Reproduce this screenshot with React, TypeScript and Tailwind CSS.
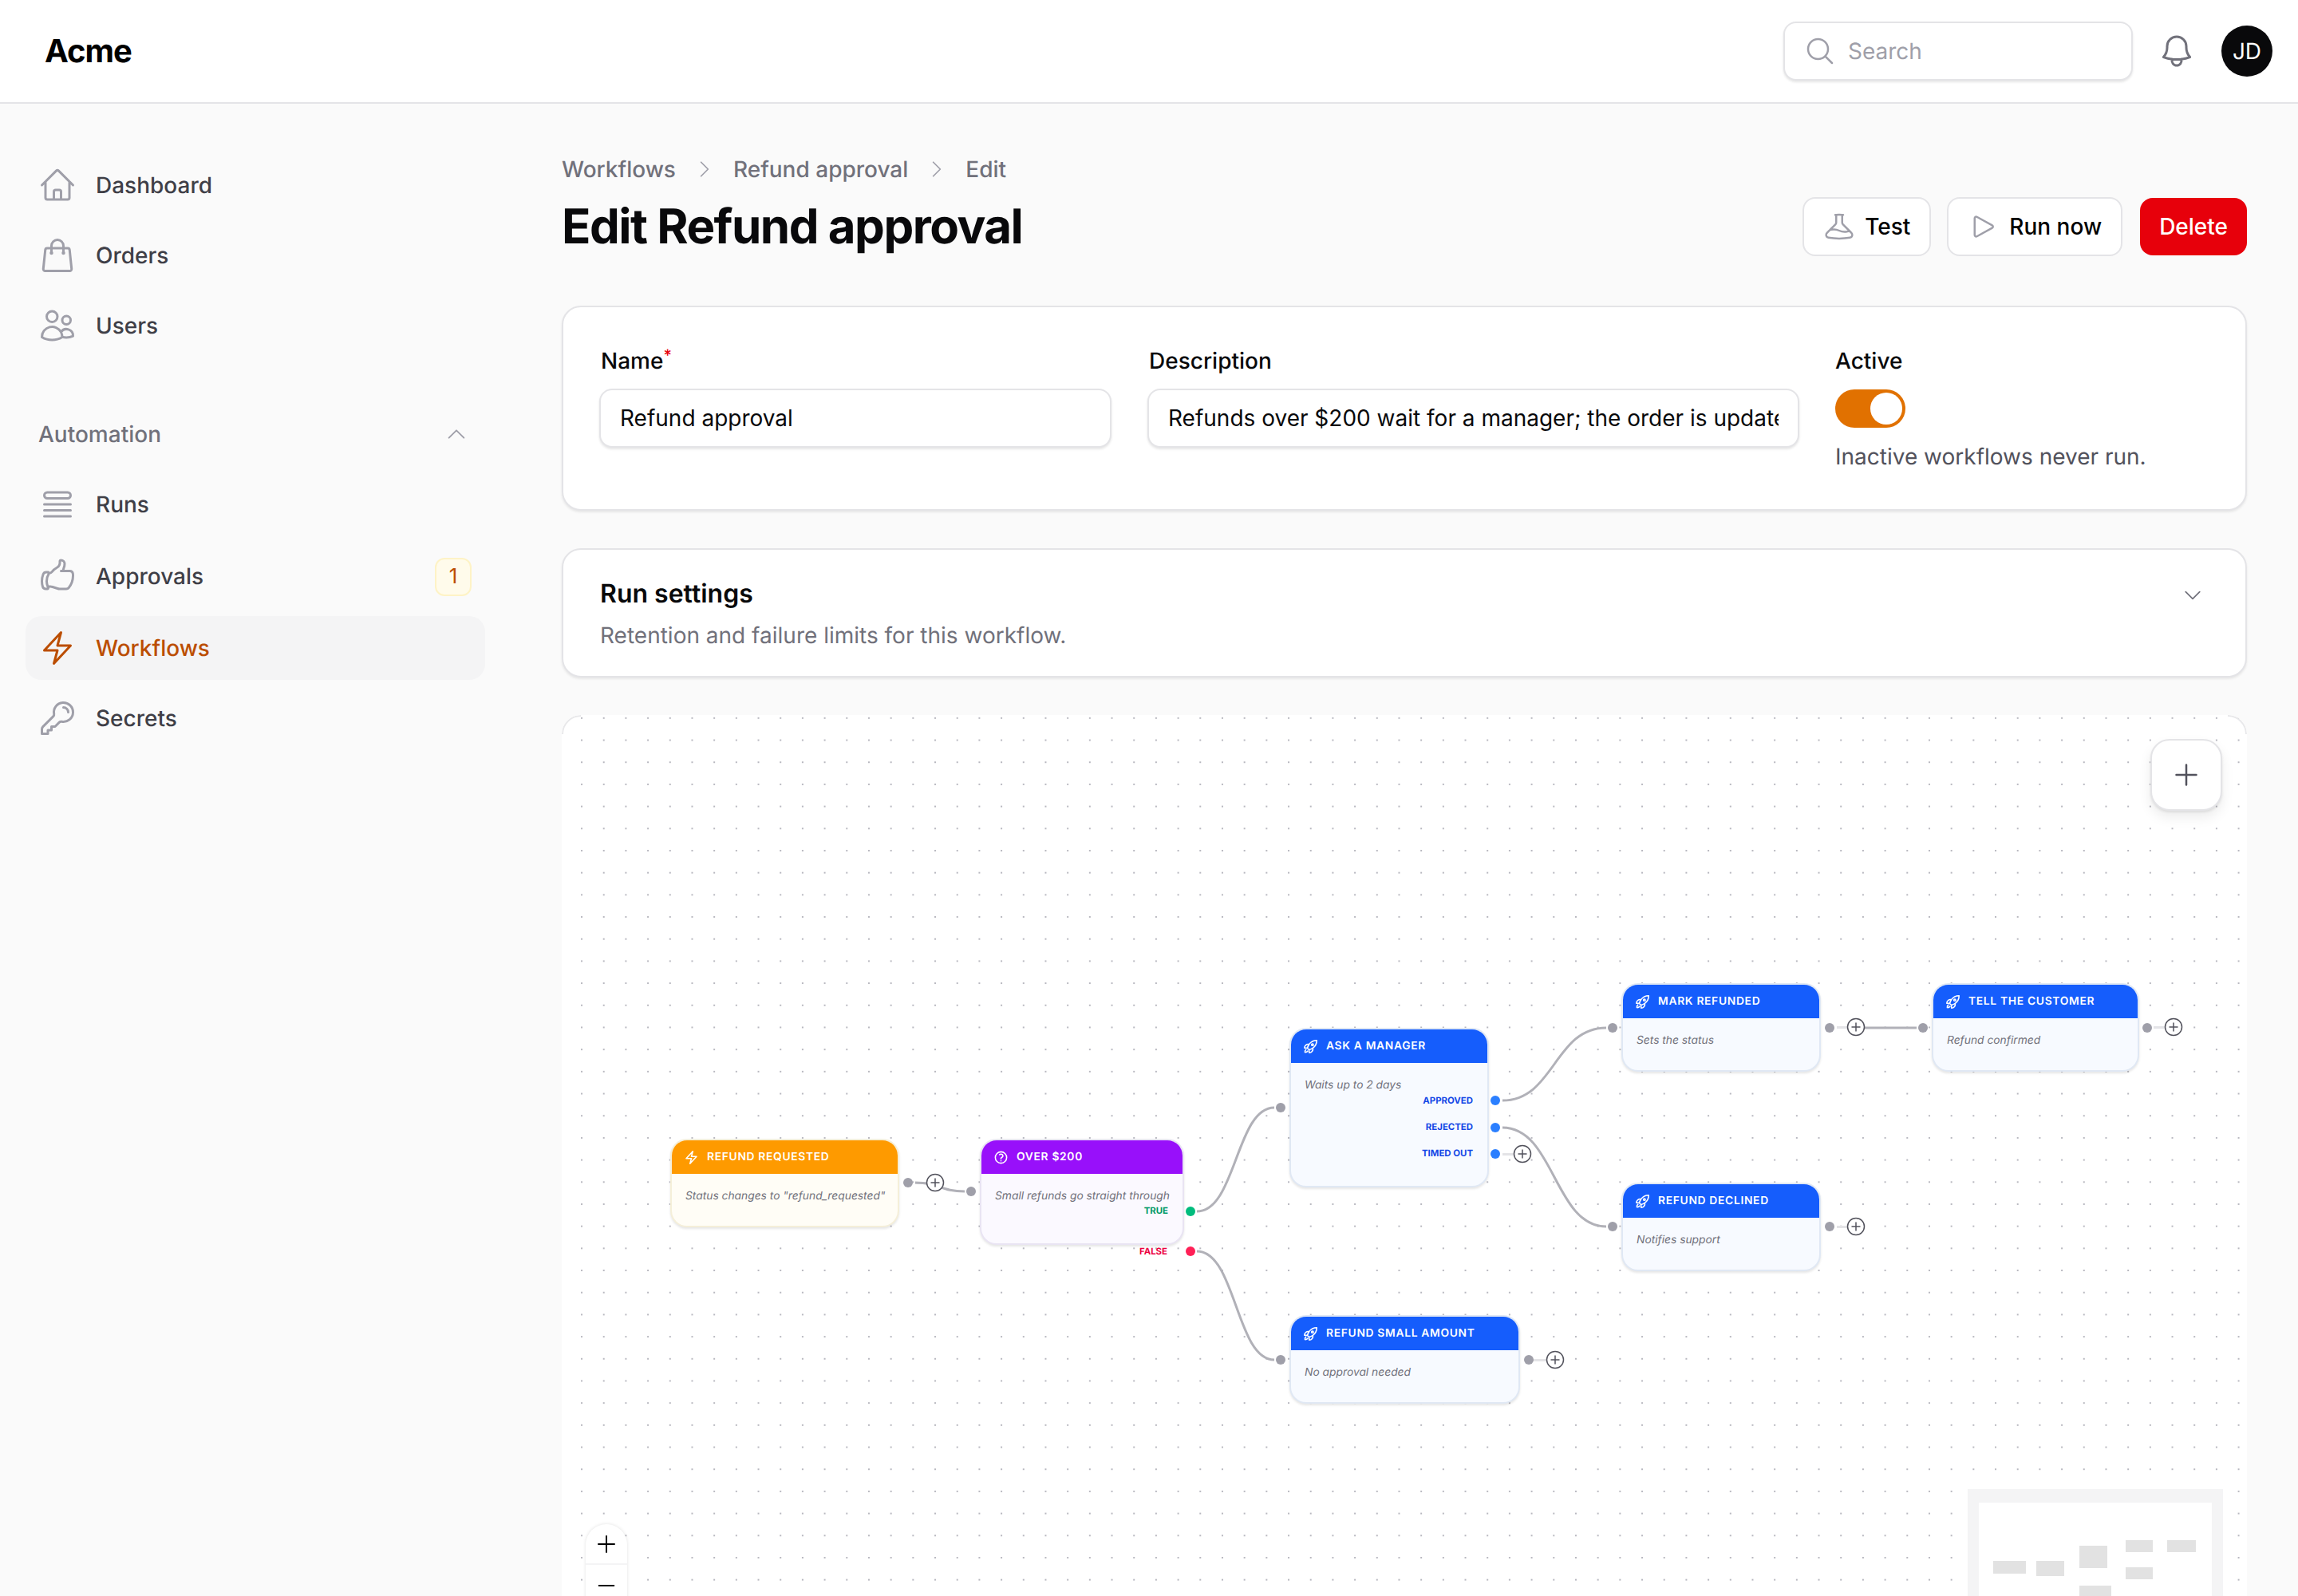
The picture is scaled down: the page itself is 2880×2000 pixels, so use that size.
import React from "react";
import {
  HiOutlineHome, HiOutlineShoppingBag, HiOutlineUsers, HiOutlineQueueList, HiOutlineHandThumbUp,
  HiOutlineBolt, HiOutlineKey, HiOutlineBeaker, HiOutlinePlay, HiOutlineBell, HiOutlineMagnifyingGlass,
  HiOutlineChevronUp, HiOutlineChevronDown, HiOutlineChevronRight, HiOutlineRocketLaunch,
  HiOutlineQuestionMarkCircle, HiOutlinePlus, HiOutlineMinus,
} from "react-icons/hi2";

function NavItem({ icon: Icon, label, active, badge, tall }: { icon: any; label: string; active?: boolean; badge?: string; tall?: boolean }) {
  return (
    <div className={`flex items-center gap-6 rounded-[20px] pr-[17px] pl-4 text-[28px] leading-[40px] font-medium ${tall ? "h-[84px]" : "h-20"} ${active ? "bg-zinc-100 text-amber-700" : "text-zinc-700"}`}>
      <Icon className={`h-12 w-12 shrink-0 ${active ? "text-amber-700" : "text-zinc-400"}`} />
      <span className="flex-1">{label}</span>
      {badge && (
        <span className="mt-[2px] flex h-12 w-[46px] items-center justify-center rounded-xl border-2 border-amber-100 bg-amber-50 text-[26px] font-normal text-amber-700">{badge}</span>
      )}
    </div>
  );
}

function PlusDot({ className }: { className: string }) {
  return (
    <svg className={`absolute h-6 w-6 ${className}`} viewBox="0 0 24 24" fill="none">
      <circle cx="12" cy="12" r="10.5" fill="#fff" stroke="#52525c" strokeWidth="1.5" />
      <path d="M12 6.5v11M6.5 12h11" stroke="#52525c" strokeWidth="1.5" />
    </svg>
  );
}

function Handle({ className }: { className: string }) {
  return <span className={`absolute h-3 w-3 rounded-full ${className}`} />;
}

function FlowNode({ className, head, body, border, icon: Icon, title, sub, children }: { className: string; head: string; body: string; border: string; icon: any; title: string; sub: string; children?: React.ReactNode }) {
  return (
    <div className={`absolute overflow-hidden rounded-[21px] border-2 shadow-[0_2px_3px_rgba(0,0,0,0.1)] ${border} ${body} ${className}`}>
      <div className={`flex h-[42px] items-center gap-[10px] pt-[1px] pl-[15px] text-[13.8px] font-semibold tracking-[0.05em] text-white uppercase ${head}`}>
        <Icon className="h-[19px] w-[19px] shrink-0 stroke-2" />
        <span>{title}</span>
      </div>
      <div className="pt-[18px] pl-[17px] text-[13.8px] leading-[20px] text-zinc-500 italic">{sub}</div>
      {children}
    </div>
  );
}

export default function App() {
  return (
    <div className="flex h-[2000px] w-[2880px] flex-col overflow-hidden bg-zinc-50 font-['Inter',sans-serif] text-[28px] text-zinc-950 [text-rendering:geometricPrecision]">
      <header className="flex h-[130px] shrink-0 items-center justify-between border-b-2 border-zinc-200 bg-white pr-8 pl-[56px]">
        <div className="text-[40px] font-bold tracking-tight text-black">Acme</div>
        <div className="flex items-center">
          <div className="flex h-[74px] w-[438px] items-center gap-[15px] rounded-2xl border-2 border-zinc-200 bg-white pl-[24px] shadow-[0_2px_3px_rgba(0,0,0,0.1)]">
            <HiOutlineMagnifyingGlass className="h-10 w-10 text-zinc-400" />
            <span className="text-zinc-400">Search</span>
          </div>
          <HiOutlineBell className="ml-[31px] h-12 w-12 text-zinc-500" />
          <div className="ml-[32px] flex h-16 w-16 items-center justify-center rounded-full bg-zinc-950 text-white">JD</div>
        </div>
      </header>
      <div className="flex min-h-0 flex-1">
        <aside className="flex w-[640px] shrink-0 flex-col px-8 pt-[62px]">
          <div className="flex flex-col gap-2">
            <NavItem icon={HiOutlineHome} label="Dashboard" />
            <NavItem icon={HiOutlineShoppingBag} label="Orders" />
            <NavItem icon={HiOutlineUsers} label="Users" />
          </div>
          <div className="mt-[64px] mb-[16px] flex h-[64px] items-center justify-between pr-[21px] pl-[16px] font-medium text-zinc-500">
            <span>Automation</span>
            <HiOutlineChevronUp className="h-[30px] w-[30px] text-zinc-400" />
          </div>
          <div className="flex flex-col gap-2">
            <NavItem icon={HiOutlineQueueList} label="Runs" />
            <NavItem icon={HiOutlineHandThumbUp} label="Approvals" badge="1" tall />
            <NavItem icon={HiOutlineBolt} label="Workflows" active />
            <NavItem icon={HiOutlineKey} label="Secrets" />
          </div>
        </aside>
        <main className="min-w-0 flex-1 pt-[62px] pr-16 pl-16">
          <div className="flex h-10 items-center gap-[22px] font-medium text-zinc-500">
            <span>Workflows</span>
            <HiOutlineChevronRight className="h-[28px] w-[28px] text-zinc-400" />
            <span>Refund approval</span>
            <HiOutlineChevronRight className="h-[28px] w-[28px] text-zinc-400" />
            <span>Edit</span>
          </div>
          <div className="mt-[15px] flex items-center justify-between">
            <h1 className="text-[60px] leading-[72px] font-bold tracking-tight">Edit Refund approval</h1>
            <div className="flex items-center gap-[22px] text-[28px] font-medium">
              <button className="-mr-[2px] flex h-[74px] items-center gap-3 rounded-2xl border-2 border-zinc-200 bg-white px-[24px] text-black">
                <HiOutlineBeaker className="h-10 w-10 text-zinc-400" />
                Test
              </button>
              <button className="flex h-[74px] items-center gap-3 rounded-2xl border-2 border-zinc-200 bg-white px-[24px] text-black">
                <HiOutlinePlay className="h-10 w-10 text-zinc-400" />
                Run now
              </button>
              <button className="flex h-[72px] items-center rounded-2xl bg-red-600 px-[24px] text-white">Delete</button>
            </div>
          </div>

          <section className="mt-[62px] h-[257px] rounded-[24px] border-2 border-zinc-200 bg-white pt-[46px] pl-[45px] shadow-[0_2px_3px_rgba(0,0,0,0.08)]">
            <div className="grid grid-cols-[642px_817px_1fr] gap-x-[45px]">
              <div>
                <label className="block h-[56px] pl-[2px] font-medium">Name<span className="relative -top-[10px] text-[20px] text-red-600">*</span></label>
                <input readOnly value="Refund approval" className="h-[74px] w-full rounded-2xl border-2 border-zinc-200 bg-white px-[24px] shadow-[0_2px_3px_rgba(0,0,0,0.1)] outline-none" />
              </div>
              <div>
                <label className="block h-[56px] pl-[2px] font-medium">Description</label>
                <input readOnly value="Refunds over $200 wait for a manager; the order is updated either way." className="h-[74px] w-full rounded-2xl border-2 border-zinc-200 bg-white px-[24px] shadow-[0_2px_3px_rgba(0,0,0,0.1)] outline-none" />
              </div>
              <div>
                <label className="block h-[57px] font-medium">Active</label>
                <div className="flex h-12 w-[88px] items-center justify-end rounded-full bg-amber-600 pr-1">
                  <span className="h-10 w-10 rounded-full bg-white" />
                </div>
                <p className="mt-[15px] text-zinc-600">Inactive workflows never run.</p>
              </div>
            </div>
          </section>

          <section className="mt-[47px] flex h-[162px] items-start justify-between rounded-[24px] border-2 border-zinc-200 bg-white pt-[32px] pr-[52px] pl-[46px] shadow-[0_2px_3px_rgba(0,0,0,0.08)]">
            <div>
              <div className="text-[32px] leading-[46px] font-semibold">Run settings</div>
              <div className="mt-[8px] text-zinc-500">Retention and failure limits for this workflow.</div>
            </div>
            <HiOutlineChevronDown className="mt-[11px] h-[28px] w-[28px] text-zinc-500" />
          </section>

          <section className="relative mt-[47px] h-[1200px] overflow-hidden rounded-[24px] bg-white bg-[radial-gradient(circle,#b8b8c0_1px,transparent_1.2px)] bg-[size:27.7px_27.7px] bg-[position:11.2px_-10px]">
            <svg className="absolute inset-0 h-full w-full" fill="none">
              <path d="M1 24A23 23 0 0 1 24 1" stroke="#e8e8ea" strokeWidth="2" />
              <path d="M2111 24A23 23 0 0 0 2088 1" stroke="#e8e8ea" strokeWidth="2" />
              <g stroke="#e4e4e7" strokeWidth="3">
                <path d="M443 586.5H468" />
                <path d="M1598 391.5H1622" />
                <path d="M1598 641.5H1622" />
                <path d="M1995 391.5H2020" />
                <path d="M1212 808.5H1238" />
                <path d="M1179 550.5H1204" />
              </g>
              <g stroke="#b1b1b8" strokeWidth="3">
                <path d="M443 586C474 586 474 597 505 597" />
                <path d="M796 622C845 622 845 492 893 492" />
                <path d="M796 672C845 672 845 808 893 808" />
                <path d="M1179 483C1244 483 1244 392 1309 392" />
                <path d="M1179 517C1244 517 1244 641 1309 641" />
                <path d="M1622 392H1698" />
              </g>
            </svg>

            <FlowNode className="top-[531px] left-[136px] h-[111px] w-[287px]" border="border-[#f5efd9]" head="bg-amber-500" body="bg-[#fffdf6]" icon={HiOutlineBolt} title="Refund requested" sub={'Status changes to "refund_requested"'} />
            <FlowNode className="top-[531px] left-[524px] h-[133px] w-[256px]" border="border-[#e9e4f3]" head="bg-purple-600" body="bg-[#fbf9ff]" icon={HiOutlineQuestionMarkCircle} title="Over $200" sub="Small refunds go straight through">
              <span className="absolute top-[80px] right-[18px] text-[11.4px] leading-4 font-bold text-emerald-600">TRUE</span>
            </FlowNode>
            <span className="absolute top-[664px] right-[1353px] text-[11.4px] leading-4 font-bold text-rose-600">FALSE</span>
            <FlowNode className="top-[392px] left-[912px] h-[200px] w-[250px]" border="border-[#e0e8f4]" head="bg-blue-600" body="bg-[#f7faff]" icon={HiOutlineRocketLaunch} title="Ask a manager" sub="Waits up to 2 days">
              <span className="absolute top-[81px] right-[18px] text-[11.4px] leading-4 font-bold text-blue-700">APPROVED</span>
              <span className="absolute top-[114px] right-[18px] text-[11.4px] leading-4 font-bold text-blue-700">REJECTED</span>
              <span className="absolute top-[147px] right-[18px] text-[11.4px] leading-4 font-bold text-blue-700">TIMED OUT</span>
            </FlowNode>
            <FlowNode className="top-[336px] left-[1328px] h-[111px] w-[250px]" border="border-[#e0e8f4]" head="bg-blue-600" body="bg-[#f7faff]" icon={HiOutlineRocketLaunch} title="Mark refunded" sub="Sets the status" />
            <FlowNode className="top-[336px] left-[1717px] h-[111px] w-[260px]" border="border-[#e0e8f4]" head="bg-blue-600" body="bg-[#f7faff]" icon={HiOutlineRocketLaunch} title="Tell the customer" sub="Refund confirmed" />
            <FlowNode className="top-[586px] left-[1328px] h-[111px] w-[250px]" border="border-[#e0e8f4]" head="bg-blue-600" body="bg-[#f7faff]" icon={HiOutlineRocketLaunch} title="Refund declined" sub="Notifies support" />
            <FlowNode className="top-[752px] left-[912px] h-[111px] w-[289px]" border="border-[#e0e8f4]" head="bg-blue-600" body="bg-[#f7faff]" icon={HiOutlineRocketLaunch} title="Refund small amount" sub="No approval needed" />

            <Handle className="top-[580px] left-[428px] bg-zinc-400" />
            <Handle className="top-[591px] left-[507px] bg-zinc-400" />
            <Handle className="top-[616px] left-[782px] bg-emerald-500" />
            <Handle className="top-[666px] left-[782px] bg-rose-500" />
            <Handle className="top-[486px] left-[895px] bg-zinc-400" />
            <Handle className="top-[802px] left-[895px] bg-zinc-400" />
            <Handle className="top-[477px] left-[1164px] bg-blue-500" />
            <Handle className="top-[511px] left-[1164px] bg-blue-500" />
            <Handle className="top-[544px] left-[1164px] bg-blue-500" />
            <Handle className="top-[386px] left-[1311px] bg-zinc-400" />
            <Handle className="top-[635px] left-[1311px] bg-zinc-400" />
            <Handle className="top-[386px] left-[1583px] bg-zinc-400" />
            <Handle className="top-[635px] left-[1583px] bg-zinc-400" />
            <Handle className="top-[386px] left-[1700px] bg-zinc-400" />
            <Handle className="top-[386px] left-[1981px] bg-zinc-400" />
            <Handle className="top-[802px] left-[1206px] bg-zinc-400" />

            <PlusDot className="top-[574px] left-[456px]" />
            <PlusDot className="top-[379px] left-[1610px]" />
            <PlusDot className="top-[629px] left-[1610px]" />
            <PlusDot className="top-[379px] left-[2008px]" />
            <PlusDot className="top-[538px] left-[1192px]" />
            <PlusDot className="top-[796px] left-[1233px]" />

            <button className="absolute top-[30px] right-[31px] flex h-[90px] w-[90px] items-center justify-center rounded-[24px] border-2 border-zinc-200 bg-white shadow-[0_8px_16px_rgba(0,0,0,0.08),0_2px_3px_rgba(0,0,0,0.08)]">
              <HiOutlinePlus className="h-10 w-10 text-zinc-600" />
            </button>

            <div className="absolute top-[1014px] left-[30px] w-[52px] overflow-hidden rounded-t-[26px] bg-white shadow-[0_0_4px_rgba(0,0,0,0.12)]">
              <div className="flex h-[51px] items-center justify-center border-b-2 border-zinc-100"><HiOutlinePlus className="h-8 w-8 text-black" /></div>
              <div className="flex h-[51px] items-center justify-center"><HiOutlineMinus className="h-8 w-8 text-black" /></div>
            </div>

            <div className="absolute top-[970px] right-[30px] h-[200px] w-[320px] bg-zinc-100 px-[14px] pt-[17px]">
              <div className="relative h-full w-full bg-white">
                <span className="absolute top-[73px] left-[18px] h-[16px] w-[41px] bg-[#e2e2e2]" />
                <span className="absolute top-[73px] left-[72px] h-[19px] w-[35px] bg-[#e2e2e2]" />
                <span className="absolute top-[54px] left-[126px] h-[28px] w-[35px] bg-[#e2e2e2]" />
                <span className="absolute top-[47px] left-[184px] h-[15px] w-[34px] bg-[#e2e2e2]" />
                <span className="absolute top-[47px] left-[236px] h-[15px] w-[36px] bg-[#e2e2e2]" />
                <span className="absolute top-[81px] left-[184px] h-[15px] w-[34px] bg-[#e2e2e2]" />
                <span className="absolute top-[104px] left-[126px] h-[15px] w-[40px] bg-[#e2e2e2]" />
              </div>
            </div>
          </section>
        </main>
      </div>
    </div>
  );
}
